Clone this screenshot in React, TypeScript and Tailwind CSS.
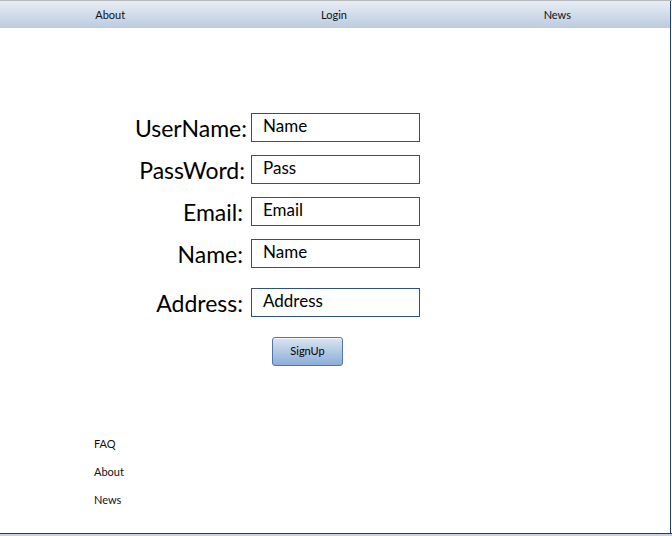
import React from "react";

const font = { fontFamily: "Lato, 'Open Sans', sans-serif" };

function Row({ label, value, mt, pr }: { label: string; value: string; mt: string; pr: string }) {
  return (
    <div className={`flex items-center ${mt}`}>
      <div className={`w-[251px] shrink-0 text-right ${pr} text-[23px] leading-[28px] text-black`}>
        {label}
      </div>
      <div className="w-[169px] h-[29px] border border-[#2d5183] flex items-center pl-[11px] pb-[3px] text-[17px] text-black">
        {value}
      </div>
    </div>
  );
}

export default function App() {
  return (
    <div className="w-[672px] h-[536px] bg-white flex flex-col overflow-hidden" style={font}>
      <div className="flex flex-1 flex-col w-[671px] border-r border-[#1f3c6c]">
        <div className="h-px bg-[#b7b9bd] w-[672px]" />
        <div className="h-[27px] grid grid-cols-3 bg-gradient-to-b from-[#e8edf5] to-[#bccbdf] text-[11px] text-[#111]">
          <div className="flex items-center justify-center pr-[3px] pt-[2px]">About</div>
          <div className="flex items-center justify-center pr-[2px] pt-[2px]">Login</div>
          <div className="flex items-center justify-center pr-[2px] pt-[2px]">News</div>
        </div>
        <div className="flex flex-col pt-[85px]">
          <Row label="UserName:" value="Name" mt="mt-0" pr="pr-[4px]" />
          <Row label="PassWord:" value="Pass" mt="mt-[13px]" pr="pr-[6px]" />
          <Row label="Email:" value="Email" mt="mt-[13px]" pr="pr-[8px]" />
          <Row label="Name:" value="Name" mt="mt-[13px]" pr="pr-[8px]" />
          <Row label="Address:" value="Address" mt="mt-[20px]" pr="pr-[8px]" />
          <div className="pl-[272px] mt-[20px]">
            <button className="w-[71px] h-[29px] rounded-[3px] border border-[#4f75ab] bg-gradient-to-b from-[#dbe5f2] via-[#b3c8e3] to-[#8daed9] text-[11px] text-black shadow-[inset_0_1px_0_rgba(255,255,255,0.7)]">
              SignUp
            </button>
          </div>
        </div>
        <div className="flex flex-col pl-[94px] mt-[71px] text-[11px] text-[#111] leading-[14px] gap-[14px]">
          <div>FAQ</div>
          <div>About</div>
          <div>News</div>
        </div>
      </div>
      <div className="h-px bg-[#1f3c6c]" />
      <div className="h-[2px] bg-[#c9d2de]" />
    </div>
  );
}
